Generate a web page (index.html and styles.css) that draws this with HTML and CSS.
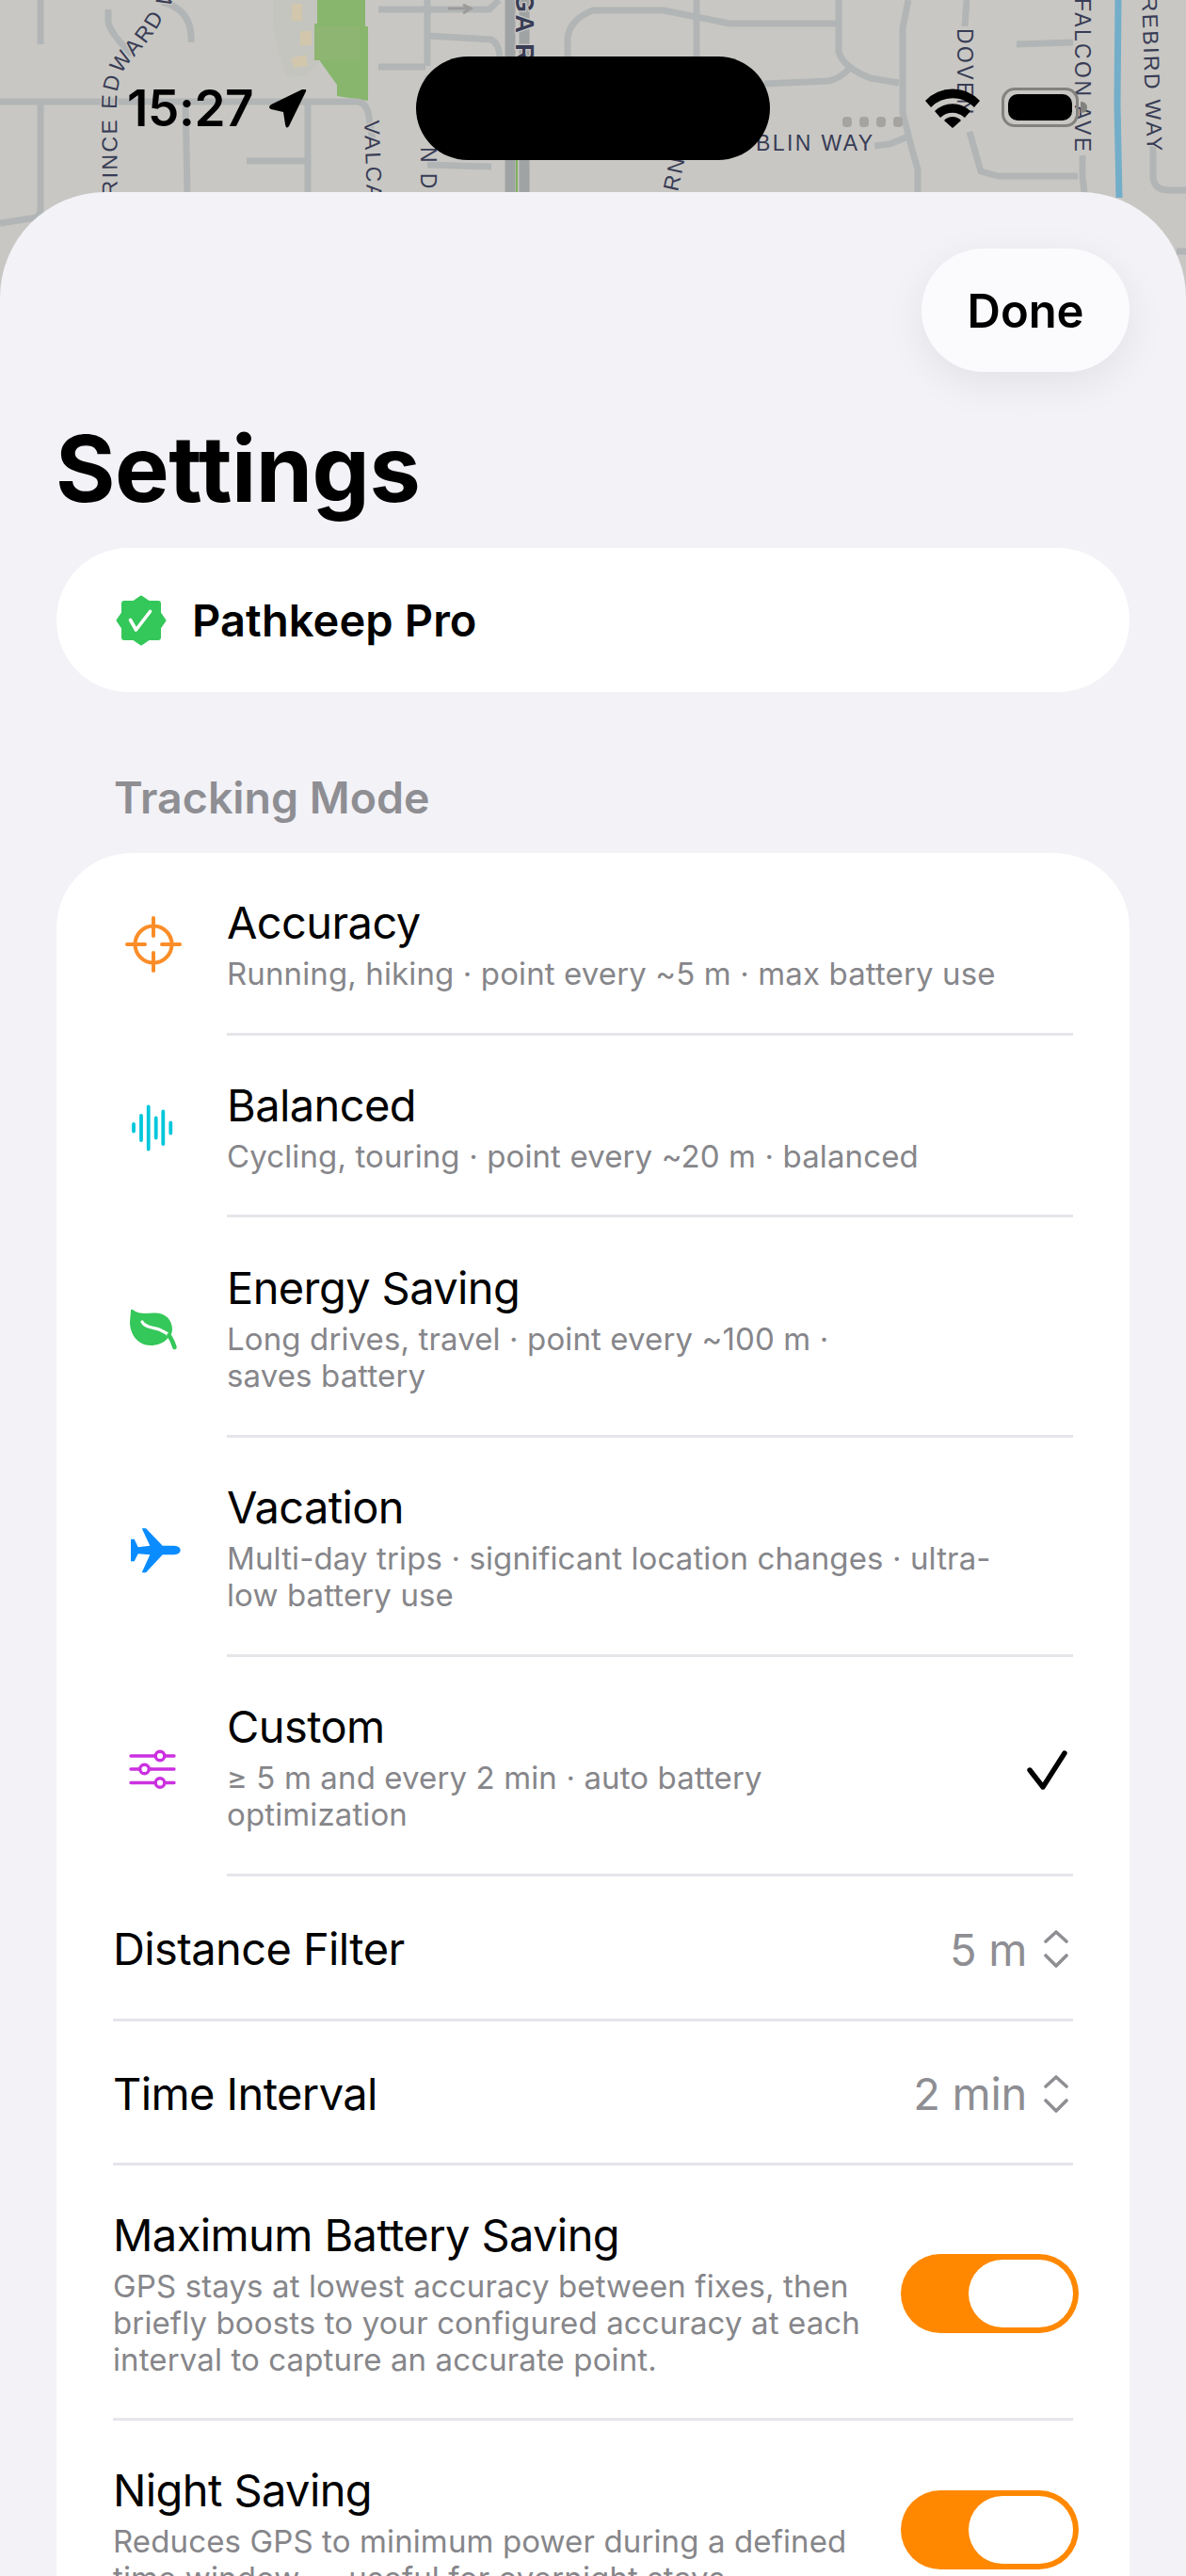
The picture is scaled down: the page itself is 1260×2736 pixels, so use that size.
FILE: index.html
```html
<!DOCTYPE html>
<html lang="en">
<head>
<meta charset="utf-8">
<title>Settings</title>
<link rel="stylesheet" href="styles.css">
</head>
<body>
<div class="phone">
  <svg class="map" viewBox="0 0 1260 320" width="1260" height="320">
    <defs>
      <path id="prince" d="M125 226 L124 110 C124 95 128 78 136 68 C146 56 158 44 168 28 C174 18 180 8 186 -6"/>
    </defs>
    <rect width="1260" height="320" fill="#c8c7c3"/>
    <path d="M290 0H337V25L340 65L325 80L305 82L297 60L290 30Z" fill="#c4c5bf"/>
    <path d="M310 4H321V22H310ZM319 33H331V48H319ZM309 62L325 58L327 70L312 72Z" fill="#d2c7ac"/>
    <path d="M337 0H388V28H391V107L358 102V90L340 65L334 25H337Z" fill="#87b66c"/>
    <rect x="334" y="28" width="48" height="36" fill="#8fb573"/>
    <g class="roads">
      <path d="M43 0V47"/>
      <path d="M0 108H378Q390 108 392 124L396 150"/>
      <path d="M43 108V222Q43 232 33 232L0 237"/>
      <path d="M197 108L199 204"/>
      <path d="M327 108V204M262 171H327"/>
      <path d="M115 10V24Q118 36 140 58"/>
      <path d="M172 2Q205 10 203 45"/>
      <path d="M454 0V70M402 10H520L530 0M454 38L522 42Q530 46 531 60M402 71H452"/>
      <path d="M454 175L522 177M455 80V100"/>
      <path d="M603 60V40Q606 20 630 11H705L775 25H893M740 0V60M891 0V55Q896 72 925 83L955 88"/>
      <path d="M812 89L880 86Q892 84 903 72"/>
      <path d="M965 0L959 30V120L968 155L975 180V204"/>
      <path d="M929 155L945 153L965 145"/>
      <path d="M1027 0L1025 28M1030 140L1042 182L1060 187H1145M1150 165V187L1152 204"/>
      <path d="M1080 47L1140 45"/>
      <path d="M1225 155V188Q1226 202 1242 202H1260"/>
      <path d="M1250 267H1260"/>
    </g>
    <g class="main-road">
      <path d="M542 0V204M557 0V204"/>
    </g>
    <path d="M549 170V204" stroke="#7fb060" stroke-width="2" fill="none"/>
    <path d="M1188 0L1187 110L1189 210" stroke="#72aec9" stroke-width="7" fill="none"/>
    <g class="labels">
      <text><textPath href="#prince" startOffset="0">PRINCE EDWARD WAY</textPath></text>
      <text transform="translate(387 128) rotate(88)">VALCA</text>
      <text transform="translate(447 156) rotate(90)">N DR</text>
      <text class="bold" transform="translate(548 -8) rotate(90)">GA R</text>
      <text transform="translate(720 204) rotate(-78)">RN</text>
      <text x="803" y="160">BLIN WAY</text>
      <text transform="translate(1017 30) rotate(90)">DOVEN</text>
      <text transform="translate(1142 -2) rotate(90)">FALCON AVE</text>
      <text transform="translate(1213 -4) rotate(88)">REBIRD WAY</text>
    </g>
    <path d="M476 9H497M492 5L500 9L492 14" stroke="#9b9c9a" stroke-width="3" fill="none"/>
  </svg>

  <div class="status">
    <span class="clock">15:27</span>
    <svg class="locate" viewBox="0 0 42 42" width="42" height="42"><path d="M40 2L22 39Q19 43 18 37L16 24L3 21Q-1 19 3 16L36 0Q41-1 40 2Z"/></svg>
    <div class="island"></div>
    <div class="dots"><i></i><i></i><i></i><i></i></div>
    <svg class="wifi" viewBox="0 0 58 44" width="58" height="44">
      <path d="M0 15A40 40 0 0 1 58 15L52 22A32 32 0 0 0 6 22Z"/>
      <path d="M10 26A27 27 0 0 1 48 26L42 33A19 19 0 0 0 16 33Z"/>
      <path d="M20 36A12 12 0 0 1 38 36L29 44Z"/>
    </svg>
    <div class="battery"><div class="cell"></div></div>
    <div class="nub"></div>
  </div>

  <main class="sheet">
    <div class="toolbar"><button class="done">Done</button></div>
    <h1 class="heading">Settings</h1>

    <div class="pro">
      <svg class="badge" viewBox="0 0 54 54" width="54" height="54">
        <path fill="#34c759" stroke="#34c759" stroke-width="3" stroke-linejoin="round" d="M27 2L35 7.500H45Q46.500 7.500 46.500 9V19L52 27L46.500 35V45Q46.500 46.500 45 46.500H35L27 52L19 46.500H9Q7.500 46.500 7.500 45V35L2 27L7.500 19V9Q7.500 7.500 9 7.500H19Z"/>
        <path d="M15.500 26.500L21.500 37L36.500 17.500" fill="none" stroke="#fff" stroke-width="3.600" stroke-linecap="round" stroke-linejoin="round"/>
      </svg>
      <span class="pro-name">Pathkeep Pro</span>
    </div>

    <h2 class="section">Tracking Mode</h2>

    <section class="card">
      <div class="mode h194">
        <svg class="mode-icon" viewBox="0 0 60 60" width="60" height="60" fill="none" stroke="#fb8d28" stroke-width="4" stroke-linecap="round">
          <circle cx="30" cy="30" r="19.500"/>
          <path d="M30 2V21M30 39V58M2 30H21M39 30H58"/>
        </svg>
        <div class="mode-text">
          <div class="title">Accuracy</div>
          <div class="sub">Running, hiking · point every ~5 m · max battery use</div>
        </div>
      </div>
      <div class="mode h193">
        <svg class="mode-icon" viewBox="0 0 60 60" width="60" height="60" fill="none" stroke="#00c7dc" stroke-width="3.800" stroke-linecap="round">
          <path d="M9 27V34.500M17 18V44M24.700 8.500V53.500M32.700 20.500V41.500M40.300 13.500V48M48.300 25.500V36.500"/>
        </svg>
        <div class="mode-text">
          <div class="title">Balanced</div>
          <div class="sub">Cycling, touring · point every ~20 m · balanced</div>
        </div>
      </div>
      <div class="mode h234">
        <svg class="mode-icon" viewBox="0 0 60 60" width="60" height="60">
          <path fill="#34c759" d="M6 12Q6 10 8 11C14 16 22 15 30 14.500C43 14 50 22 50 32C50 36 48 38 47 39C42 47 33 49 27 49C14 49 5 38 5 24Z"/>
          <path d="M18 24C21 30 30 30 36 32C41 34 45 36 50 41" fill="none" stroke="#fff" stroke-width="3.200" stroke-linecap="round"/>
          <path d="M46.500 38C49 42 51 46 52.500 51" fill="none" stroke="#34c759" stroke-width="4.600" stroke-linecap="round"/>
        </svg>
        <div class="mode-text">
          <div class="title">Energy Saving</div>
          <div class="sub">Long drives, travel · point every ~100 m ·<br>saves battery</div>
        </div>
      </div>
      <div class="mode h233">
        <svg class="mode-icon" viewBox="0 0 60 60" width="60" height="60">
          <path fill="#0a8cff" d="M17.700 9.200H22L39.700 27.800H52Q58.700 28.500 58.700 32.500Q58.700 36.500 52 37.200H39.700L22 56.200H17.700L26.300 37.200L13.700 36.200L9.700 44.200H6V20.800H9.700L13.700 29.200L26.300 27.800Z"/>
        </svg>
        <div class="mode-text">
          <div class="title">Vacation</div>
          <div class="sub">Multi-day trips · significant location changes · ultra-<br>low battery use</div>
        </div>
      </div>
      <div class="mode h233">
        <svg class="mode-icon" viewBox="0 0 60 60" width="60" height="60" fill="none" stroke="#cb30e0" stroke-width="3.400" stroke-linecap="round">
          <path d="M6 18H32M42 18H52M6 32H15.500M25.500 32H52M6 46.500H32M42 46.500H52"/>
          <circle cx="37" cy="18" r="4.800"/><circle cx="20.500" cy="32" r="4.800"/><circle cx="37" cy="46.500" r="4.800"/>
        </svg>
        <div class="mode-text">
          <div class="title">Custom</div>
          <div class="sub">≥ 5 m and every 2 min · auto battery<br>optimization</div>
        </div>
        <svg class="tick" viewBox="0 0 46 44" width="46" height="44"><path d="M4 21L18 39L41 3" fill="none" stroke="#000" stroke-width="5.400" stroke-linecap="round" stroke-linejoin="round"/></svg>
      </div>

      <div class="row h154">
        <span class="title">Distance Filter</span>
        <span class="value">5 m</span>
        <svg class="updown" viewBox="0 0 28 40" width="28" height="40" fill="none" stroke="#8e8e93" stroke-width="3.600" stroke-linecap="round" stroke-linejoin="round"><path d="M3 12L14 2L25 12M3 27L14 38L25 27"/></svg>
      </div>
      <div class="row h153">
        <span class="title">Time Interval</span>
        <span class="value">2 min</span>
        <svg class="updown" viewBox="0 0 28 40" width="28" height="40" fill="none" stroke="#8e8e93" stroke-width="3.600" stroke-linecap="round" stroke-linejoin="round"><path d="M3 12L14 2L25 12M3 27L14 38L25 27"/></svg>
      </div>
      <div class="row h271">
        <div class="option">
          <div class="title">Maximum Battery Saving</div>
          <div class="sub">GPS stays at lowest accuracy between fixes, then<br>briefly boosts to your configured accuracy at each<br>interval to capture an accurate point.</div>
        </div>
        <div class="switch"><div class="thumb"></div></div>
      </div>
      <div class="row h232">
        <div class="option">
          <div class="title">Night Saving</div>
          <div class="sub">Reduces GPS to minimum power during a defined<br>time window — useful for overnight stays.</div>
        </div>
        <div class="switch"><div class="thumb"></div></div>
      </div>
    </section>
  </main>
</div>
</body>
</html>
```
FILE: styles.css
```css
* { box-sizing: border-box; }

html, body {
  margin: 0;
  padding: 0;
  height: 2736px;
  overflow: hidden;
}

body { font-family: Inter, "Noto Sans", sans-serif; color: #000; }

.phone {
  position: relative;
  width: 1260px;
  height: 2736px;
  overflow: hidden;
  background: #c8c7c3;
}

/* Street map behind the sheet */
.map { position: absolute; left: 0; top: 0; display: block; }
.roads path { fill: none; stroke: #b2b5b6; stroke-width: 7; stroke-linejoin: round; }
.main-road path { fill: none; stroke: #9fa3a3; stroke-width: 11; }
.labels text {
  font-family: "Liberation Sans", sans-serif;
  font-size: 23px;
  letter-spacing: 2.4px;
  fill: #383c55;
  stroke: #c8c7c3;
  stroke-width: 2.5px;
  paint-order: stroke;
}
.labels .bold { font-weight: 700; font-size: 27px; }

/* Status bar */
.status { position: absolute; left: 0; top: 0; width: 1260px; height: 204px; }
.clock {
  position: absolute;
  left: 135px;
  top: 84px;
  font-size: 53px;
  line-height: 62px;
  font-weight: 600;
  letter-spacing: -0.4px;
}
.locate { position: absolute; left: 285px; top: 95px; }
.island {
  position: absolute;
  left: 442px;
  top: 60px;
  width: 376px;
  height: 110px;
  border-radius: 55px;
  background: #000;
}
.dots { position: absolute; left: 895px; top: 124px; display: flex; gap: 8px; }
.dots i { width: 10px; height: 11px; border-radius: 4px; background: #a5a4a0; }
.wifi { position: absolute; left: 983px; top: 92px; }
.battery {
  position: absolute;
  left: 1064px;
  top: 93px;
  width: 82px;
  height: 42px;
  padding: 4px;
  border: 3px solid #82827f;
  border-radius: 14px;
}
.cell { width: 100%; height: 100%; border-radius: 10px; background: #000; }
.nub {
  position: absolute;
  left: 1148px;
  top: 108px;
  width: 7px;
  height: 12px;
  border-radius: 0 6px 6px 0;
  background: #82827f;
}

/* Bottom sheet */
.sheet {
  position: absolute;
  left: 0;
  top: 204px;
  width: 1260px;
  height: 2532px;
  padding: 60px 60px 0;
  background: #f2f2f7;
  border-radius: 112px 112px 0 0;
}

.toolbar { display: flex; justify-content: flex-end; }
.done {
  width: 221px;
  height: 131px;
  padding: 2px 0 0;
  border: 0;
  border-radius: 66px;
  background: #fbfbfe;
  box-shadow: 0 12px 44px rgba(0, 0, 0, 0.07);
  font-family: Inter, sans-serif;
  font-size: 49px;
  font-weight: 600;
  color: #000;
  letter-spacing: -0.1px;
}

.heading {
  margin: 53px 0 0 -1px;
  font-size: 97px;
  line-height: 100px;
  font-weight: 700;
  letter-spacing: -0.5px;
}

.pro {
  display: flex;
  align-items: center;
  height: 153px;
  margin-top: 34px;
  padding-left: 63px;
  background: #fff;
  border-radius: 76px;
}
.badge { flex: none; }
.pro-name {
  margin-left: 27px;
  font-size: 47px;
  font-weight: 600;
  letter-spacing: 0.1px;
}

.section {
  margin: 84px 0 0 61px;
  font-size: 46.5px;
  line-height: 56px;
  font-weight: 600;
  color: #8e8e93;
}

.card {
  margin-top: 31px;
  height: 2200px;
  background: #fff;
  border-radius: 80px;
  padding: 0 60px;
}

.mode {
  position: relative;
  display: flex;
  align-items: center;
  padding-left: 121px;
}
.mode::after,
.row::after {
  content: "";
  position: absolute;
  left: 121px;
  right: 0;
  bottom: 0;
  height: 3px;
  background: #e5e5ea;
}
.row::after { left: 0; }

.mode-icon { position: absolute; left: 13px; top: 50%; margin-top: -30px; }
.mode-text { flex: 1; }

.title { font-size: 47px; line-height: 56px; font-weight: 400; letter-spacing: -0.6px; }
.sub {
  margin-top: 7px;
  font-size: 33px;
  line-height: 39px;
  letter-spacing: 0.12px;
  color: #86868a;
}

.tick { position: absolute; right: 4px; top: 50%; margin-top: -18px; }

.row {
  position: relative;
  display: flex;
  align-items: center;
}
.row .title { flex: 1; }
.value { font-size: 47px; letter-spacing: -0.3px; color: #8e8e93; margin-right: 17px; }
.updown { flex: none; margin-right: 4px; }

.option { flex: 1; }
.option .title { flex: none; }

.switch {
  flex: none;
  width: 189px;
  height: 84px;
  margin-right: -6px;
  padding: 6px;
  display: flex;
  justify-content: flex-end;
  border-radius: 42px;
  background: #ff8800;
}
.thumb { width: 111px; height: 72px; border-radius: 36px; background: #fff; }

.h153 { height: 153px; }
.h154 { height: 154px; }
.h193 { height: 193px; }
.h194 { height: 194px; }
.h232 { height: 232px; }
.h233 { height: 233px; }
.h234 { height: 234px; }
.h271 { height: 271px; }
```
